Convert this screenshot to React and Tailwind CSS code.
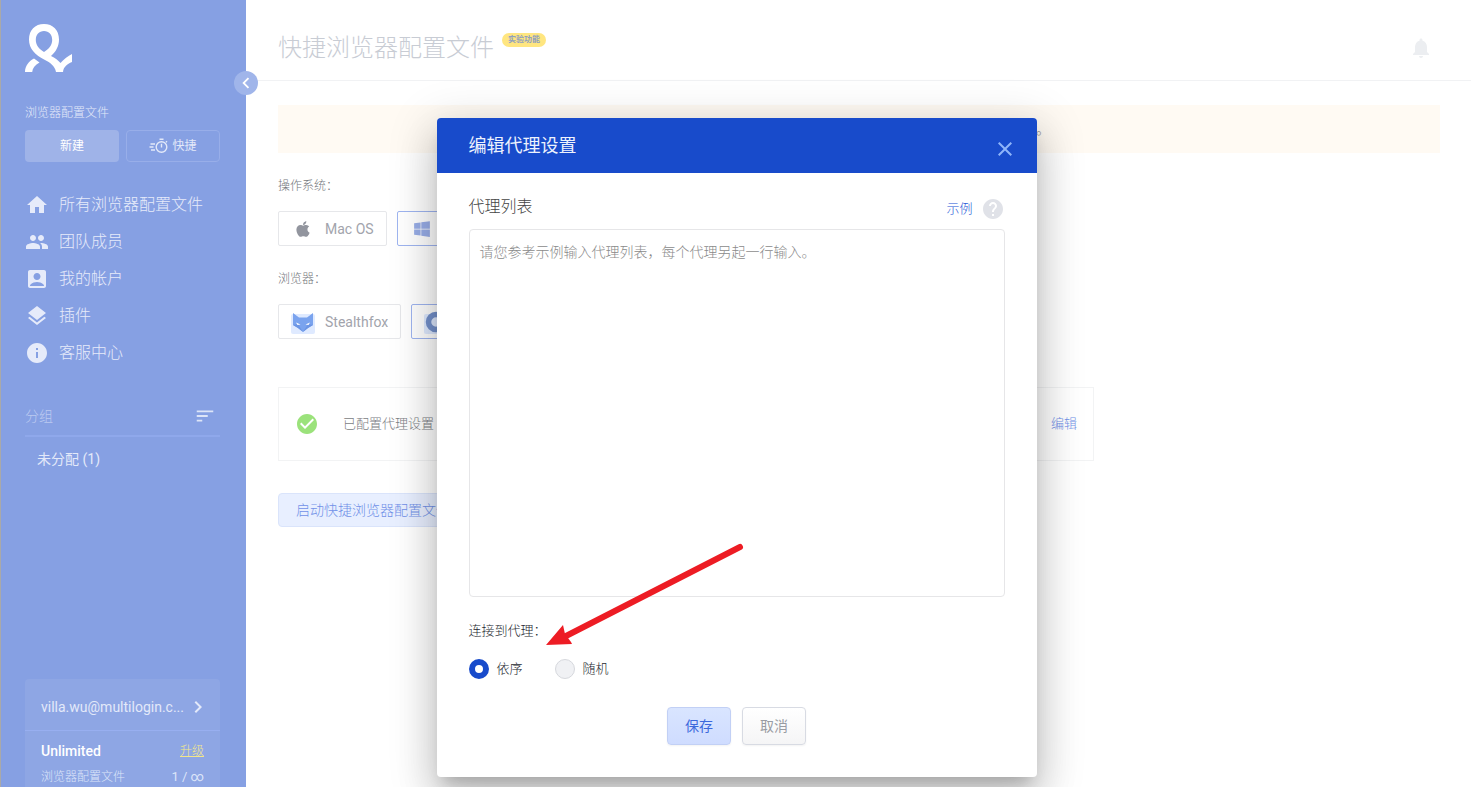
import { useState } from "react";
import { FaApple, FaWindows } from "react-icons/fa";
import {
  MdAccountBox,
  MdCheckCircle,
  MdChevronLeft,
  MdChevronRight,
  MdClose,
  MdHelp,
  MdHome,
  MdInfo,
  MdLayers,
  MdNotifications,
  MdPeople,
  MdSort,
} from "react-icons/md";

const NAV = [
  { label: "所有浏览器配置文件", icon: MdHome },
  { label: "团队成员", icon: MdPeople },
  { label: "我的帐户", icon: MdAccountBox },
  { label: "插件", icon: MdLayers },
  { label: "客服中心", icon: MdInfo },
];

const ORDER_OPTIONS = [
  { value: "sequential", label: "依序" },
  { value: "random", label: "随机" },
];

const Logo = () => (
  <svg width="48" height="48" viewBox="0 0 48 48" fill="#fff" fillRule="evenodd">
    <path d="M31 48C30 42 25 38.500 20 36C10 31 4 25 4 15.600C4 6 10 0 19 0C28 0 34 6 34 15.600C34 22 31 28 26 32C30 34 33.500 36.500 35.500 39C39 35 43 32 47 30V38C42 40 38.500 43 38 48ZM19 28C24 25 27.200 21 27.200 16C27.200 10.500 24 7 19 7C14 7 10.800 10.500 10.800 16C10.800 21 14 25 19 28Z" />
    <path d="M0 48C0 42 4 37 9 34.500L14.500 38.500C10 41 7.500 44 7.200 48Z" />
  </svg>
);

const QuickIcon = () => (
  <svg width="19" height="16" viewBox="0 0 19 16" fill="none" stroke="currentColor" strokeWidth="1.4">
    <circle cx="12.500" cy="9" r="5.300" />
    <path d="M10.500 1.200h4M12.500 5.800v3.700M17 4.300l1-1M1.500 6h4.500M.500 9h4M2 12h4" />
  </svg>
);

const FoxIcon = () => (
  <svg width="24" height="24" viewBox="0 0 24 24">
    <rect y="4" width="24" height="20" rx="2" fill="#dfeaff" />
    <path d="M2 3l6 4.500h8L22 3v12l-5 3-5 4-5-4-5-3z" fill="#7aa3ee" />
    <path d="M2 15l5-1 5 8-5-4zM22 15l-5-1-5 8 5-4z" fill="#6c95e4" />
    <path d="M5 12.500l4.500 2-3 .5zM19 12.500l-4.500 2 3 .5z" fill="#fff" />
  </svg>
);

const MimicIcon = () => (
  <svg width="24" height="24" viewBox="0 0 24 24">
    <rect y="4" width="24" height="20" rx="2" fill="#dfeaff" />
    <circle cx="12" cy="12" r="7.500" fill="none" stroke="#7592cd" strokeWidth="5.500" />
  </svg>
);

function Sidebar() {
  return (
    <aside className="relative flex w-[245px] shrink-0 flex-col bg-[#86a0e3] pt-6 pr-[26px] pl-6 text-[#e3e9f9]">
      <Logo />
      <div className="mt-8 text-xs leading-[18px] font-light text-[#e3e9f9]">浏览器配置文件</div>
      <div className="mt-2 flex justify-between text-xs">
        <button type="button" className="h-8 w-[94px] rounded bg-[#9fb3e8] text-white">新建</button>
        <button type="button" className="flex h-8 w-[94px] items-center justify-center gap-1 rounded border border-[#98aee9]">
          <QuickIcon />
          快捷
        </button>
      </div>

      <nav className="mt-6">
        {NAV.map(({ label, icon: Icon }) => (
          <a key={label} href="#" className="flex h-[37px] items-center gap-[10px] text-base font-light text-[#e6ebfa]">
            <Icon size={24} color="#e6ebfa" />
            {label}
          </a>
        ))}
      </nav>

      <div className="mt-[26px] flex h-10 items-center justify-between border-b-2 border-[#8fa8eb] text-sm font-light text-[#bccaf1]">
        分组
        <button type="button" aria-label="排序" className="mr-1 text-[#dde5f8]">
          <MdSort size={22} />
        </button>
      </div>
      <a href="#" className="mt-3 pl-3 text-sm leading-5">未分配 (1)</a>

      <div className="mt-auto rounded-t bg-[#8ea6e4]">
        <a href="#" className="flex h-[52px] items-center justify-between border-b border-[#98aff0] pt-1 pr-2.5 pl-4 text-sm">
          villa.wu@multilogin.c...
          <MdChevronRight size={24} stroke="currentColor" className="shrink-0" />
        </a>
        <div className="flex items-center justify-between px-4 pt-2.5">
          <strong className="text-sm font-medium text-white">Unlimited</strong>
          <a href="#" className="text-xs font-light text-[#f2e68a] underline">升级</a>
        </div>
        <div className="flex h-[26px] items-end justify-between px-4 pb-0.5 text-xs font-light text-[#dde5f9]">
          <span>浏览器配置文件</span>
          <span className="text-[13px] font-normal">1 / ∞</span>
        </div>
      </div>

      <button
        type="button"
        aria-label="收起"
        className="absolute top-[71px] -right-3 z-10 flex size-6 items-center justify-center rounded-full bg-[#a0b5ea] text-white"
      >
        <MdChevronLeft size={22} stroke="currentColor" />
      </button>
    </aside>
  );
}

function ChoiceButton({ icon, label, active }) {
  return (
    <button
      type="button"
      className={`flex h-[35px] items-center gap-2.5 rounded-xs border px-3 text-sm text-[#a2a4ac] ${active ? "border-[#9fb5f0]" : "border-[#e6e7ea]"}`}
    >
      <span className="flex size-6 items-center justify-center">{icon}</span>
      {label}
    </button>
  );
}

function QuickProfile() {
  return (
    <main className="min-w-0 flex-1">
      <header className="flex h-[81px] items-center border-b border-[#f1f2f4] pr-[38px] pl-8">
        <h1 className="mt-4 text-2xl font-light text-[#c8ccd4]">快捷浏览器配置文件</h1>
        <span className="ml-2 rounded-full bg-[#ffe680] px-1.5 text-[8px] leading-[14px] font-bold text-[#8fa0bf]">实验功能</span>
        <button type="button" aria-label="通知" className="mt-4 ml-auto text-[#eceef1]">
          <MdNotifications size={24} />
        </button>
      </header>

      <div className="pt-6 pr-[31px] pl-8">
        <div className="flex h-12 items-center justify-center bg-[#fffaf3] text-sm text-[#a3a19c]">
          <p className="w-[382px] text-right">。</p>
        </div>

        <div className="mt-6 text-xs leading-[18px] font-light text-[#75777d]">操作系统：</div>
        <div className="mt-4 flex gap-2.5">
          <ChoiceButton icon={<FaApple size={18} color="#92959e" />} label="Mac OS" />
          <ChoiceButton icon={<FaWindows size={18} color="#99aee8" />} label="Windows" active />
        </div>

        <div className="mt-6 text-xs leading-[18px] font-light text-[#75777d]">浏览器：</div>
        <div className="mt-4 flex gap-2.5">
          <ChoiceButton icon={<FoxIcon />} label="Stealthfox" />
          <ChoiceButton icon={<MimicIcon />} label="Mimic" active />
        </div>

        <div className="mt-12 flex h-[74px] max-w-[816px] items-center border border-[#f2f3f4] px-4 text-[13px] font-light text-[#7b7d83]">
          <MdCheckCircle size={24} color="#9be27b" />
          <span className="ml-6">已配置代理设置</span>
          <a href="#" className="ml-auto text-[#6f90e8]">编辑</a>
        </div>

        <button type="button" className="mt-8 h-[34px] rounded border border-[#dae4fb] bg-[#e8efff] px-[17px] text-sm font-light text-[#7191e8]">
          启动快捷浏览器配置文件
        </button>
      </div>
    </main>
  );
}

function ProxyDialog() {
  const [order, setOrder] = useState("sequential");

  return (
    <div className="absolute inset-0 z-20 flex items-start justify-center pt-[118px] pl-px">
      <div
        role="dialog"
        aria-labelledby="proxy-title"
        className="relative w-[600px] rounded bg-white shadow-[0_11px_15px_-7px_rgba(0,0,0,0.2),0_24px_38px_3px_rgba(0,0,0,0.14),0_9px_46px_8px_rgba(0,0,0,0.12)]"
      >
        <div className="flex h-[55px] items-center justify-between rounded-t bg-[#184bcb] pr-5 pl-8">
          <h2 id="proxy-title" className="text-lg text-[#edf2fd]">编辑代理设置</h2>
          <button type="button" aria-label="关闭" className="mt-1.5 text-[#8fb5fa]">
            <MdClose size={24} />
          </button>
        </div>

        <div className="px-8 pt-5 pb-8">
          <div className="flex h-8 items-center">
            <label htmlFor="proxy-list" className="mb-1 text-base font-light text-[#444]">代理列表</label>
            <a href="#" className="ml-auto text-[13px] font-light text-[#2456d6]">示例</a>
            <MdHelp size={24} color="#e0e2e8" className="ml-2" />
          </div>
          <textarea
            id="proxy-list"
            placeholder="请您参考示例输入代理列表，每个代理另起一行输入。"
            className="mt-1 block h-[368px] w-full resize-none rounded border border-[#e6e6e8] px-2.5 py-3 text-sm leading-5 font-light outline-none placeholder:text-[#8a8a8a]"
          />

          <fieldset className="mt-6">
            <legend className="text-[13px] leading-5 font-light text-[#25282f]">连接到代理：</legend>
            <div className="mt-[18px] flex gap-8 text-[13px] leading-5 font-light text-[#25282f]">
              {ORDER_OPTIONS.map(({ value, label }) => (
                <label key={value} className="flex items-center gap-2">
                  <input
                    type="radio"
                    name="order"
                    value={value}
                    checked={order === value}
                    onChange={() => setOrder(value)}
                    className="size-5 appearance-none rounded-full border border-[#d6d8dd] bg-[#f0f1f4] checked:border-[6px] checked:border-[#184bcb] checked:bg-white"
                  />
                  {label}
                </label>
              ))}
            </div>
          </fieldset>

          <div className="mt-7 flex justify-center gap-[11px] text-sm">
            <button type="button" className="h-[38px] w-16 rounded border border-[#c2d0f5] bg-linear-to-b from-[#d9e5ff] to-[#cfdcff] text-[#3c68dc] shadow-xs">保存</button>
            <button type="button" className="h-[38px] w-16 rounded border border-[#d8dbe3] bg-linear-to-b from-white to-[#f5f5f6] text-[#999ca3] shadow-xs">取消</button>
          </div>
        </div>

        {/* Arrow pointing at the connection order */}
        <svg className="pointer-events-none absolute top-[420px] left-[105px]" width="210" height="112" viewBox="0 0 210 112" fill="#ed1c24">
          <path d="M198 9L24 98" stroke="#ed1c24" strokeWidth="6" strokeLinecap="round" />
          <path d="M4 107L21 87L23 96L29 104L30 106Z" />
        </svg>
      </div>
    </div>
  );
}

export default function App() {
  return (
    <div className="relative flex h-screen overflow-hidden border-l border-[#a9a9a9] bg-white font-[Roboto,'Noto_Sans_CJK_SC',sans-serif]">
      <Sidebar />
      <QuickProfile />
      <ProxyDialog />
    </div>
  );
}
